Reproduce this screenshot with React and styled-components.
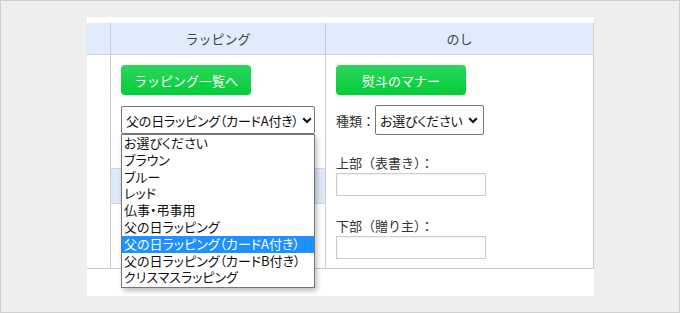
import React from "react";
import styled, { createGlobalStyle } from "styled-components";

const GlobalStyle = createGlobalStyle`
  html, body { margin: 0; padding: 0; }
  body {
    font-family: "Noto Sans CJK JP", "Noto Sans", "Liberation Sans", sans-serif;
    color: #333;
  }
`;

const Frame = styled.div`
  width: 680px;
  height: 313px;
  box-sizing: border-box;
  border: 1px solid #cfcfcf;
  background: #eeeeee;
  padding: 16px 0 0 86px;
`;

const Panel = styled.div`
  width: 507px;
  height: 279px;
  background: #fff;
  padding-top: 6px;
  box-sizing: border-box;
`;

const Table = styled.div`
  display: grid;
  grid-template-columns: 24px 215px 268px;
  width: 507px;
`;

const HeadCell = styled.div`
  height: 31px;
  background: #e0ebfb;
  border-bottom: 1px solid #c9ced6;
  border-right: 1px solid #cccccc;
  display: flex;
  align-items: center;
  justify-content: center;
  font-size: 13px;
  color: #444;
`;

const BodyCell = styled.div`
  border-bottom: 1px solid #cccccc;
  border-right: 1px solid #cccccc;
  padding-top: 10px;
  box-sizing: border-box;
  height: 214px;
  display: flex;
  flex-direction: column;
`;

const Inner = styled.div`
  padding-left: ${p => p.$pad}px;
  display: flex;
  flex-direction: column;
  align-items: flex-start;
`;

const GreenButton = styled.div`
  width: 130px;
  height: 30px;
  border-radius: 4px;
  background: linear-gradient(#2bd75c, #05cd38);
  color: #fff;
  font-size: 13px;
  display: flex;
  align-items: center;
  justify-content: center;
`;

const SelectWrap = styled.div`
  position: relative;
  margin-top: ${p => p.$top}px;
`;

const SelectBox = styled.div`
  width: ${p => p.$w}px;
  height: ${p => p.$h}px;
  box-sizing: border-box;
  border: 1px solid #767676;
  border-radius: 2px;
  background: #fff;
  color: #111;
  font-size: 13px;
  font-feature-settings: "palt";
  letter-spacing: -0.2px;
  display: flex;
  align-items: center;
  gap: 3px;
  padding: 0 5px 0 4px;
  white-space: nowrap;

  svg {
    flex-shrink: 0;
    margin-left: auto;
  }
`;

const Chevron = () => (
  <svg width="10" height="7" viewBox="0 0 10 7">
    <polyline points="1.2,1.2 5,5 8.8,1.2" fill="none" stroke="#111" strokeWidth="2.2" />
  </svg>
);

const List = styled.ul`
  position: absolute;
  top: 100%;
  left: 0;
  width: 194px;
  margin: 0;
  padding: 0 0 1px;
  list-style: none;
  background: #fff;
  border: 1px solid #767676;
  box-sizing: border-box;
  box-shadow: 2px 3px 5px rgba(0, 0, 0, 0.25);
  z-index: 2;
`;

const Item = styled.li`
  height: 16.8px;
  line-height: 16.8px;
  font-size: 13px;
  font-feature-settings: "palt";
  padding-left: 2px;
  color: ${p => (p.$active ? "#fff" : "#111")};
  background: ${p => (p.$active ? "#1e90ff" : "transparent")};
  white-space: nowrap;
`;

const Band = styled.div`
  margin-top: 34px;
  height: 36px;
  background: #dde8f8;
  border-top: 1px solid #d0d4da;
  border-bottom: 1px solid #d0d4da;
  box-sizing: border-box;
`;

const FieldRow = styled.div`
  margin-top: 10px;
  display: flex;
  align-items: center;
  font-size: 13px;
  color: #333;
`;

const Label = styled.div`
  margin-top: ${p => p.$top}px;
  font-size: 13px;
  line-height: 17px;
  color: #333;
`;

const TextInput = styled.div`
  margin-top: 2px;
  width: 150px;
  height: 23px;
  box-sizing: border-box;
  border: 1px solid #cccccc;
  box-shadow: inset 0 1px 2px rgba(0, 0, 0, 0.06);
`;

const options = [
  "お選びください",
  "ブラウン",
  "ブルー",
  "レッド",
  "仏事・弔事用",
  "父の日ラッピング",
  "父の日ラッピング（カードA付き）",
  "父の日ラッピング（カードB付き）",
  "クリスマスラッピング",
];

export default function App() {
  return (
    <>
      <GlobalStyle />
      <Frame>
        <Panel>
          <Table>
            <HeadCell />
            <HeadCell>ラッピング</HeadCell>
            <HeadCell>のし</HeadCell>

            <BodyCell />
            <BodyCell>
              <Inner $pad={10}>
                <GreenButton>ラッピング一覧へ</GreenButton>
                <SelectWrap $top={11}>
                  <SelectBox $w={194} $h={28}>
                    <span>父の日ラッピング（カードA付き）</span>
                    <Chevron />
                  </SelectBox>
                  <List>
                    {options.map((o, i) => (
                      <Item key={o} $active={i === 6}>{o}</Item>
                    ))}
                  </List>
                </SelectWrap>
              </Inner>
              <Band />
            </BodyCell>
            <BodyCell>
              <Inner $pad={10}>
                <GreenButton>熨斗のマナー</GreenButton>
                <FieldRow>
                  種類：
                  <SelectBox $w={109} $h={30}>
                    <span>お選びください</span>
                    <Chevron />
                  </SelectBox>
                </FieldRow>
                <Label $top={19}>上部（表書き）：</Label>
                <TextInput />
                <Label $top={21}>下部（贈り主）：</Label>
                <TextInput />
              </Inner>
            </BodyCell>
          </Table>
        </Panel>
      </Frame>
    </>
  );
}
